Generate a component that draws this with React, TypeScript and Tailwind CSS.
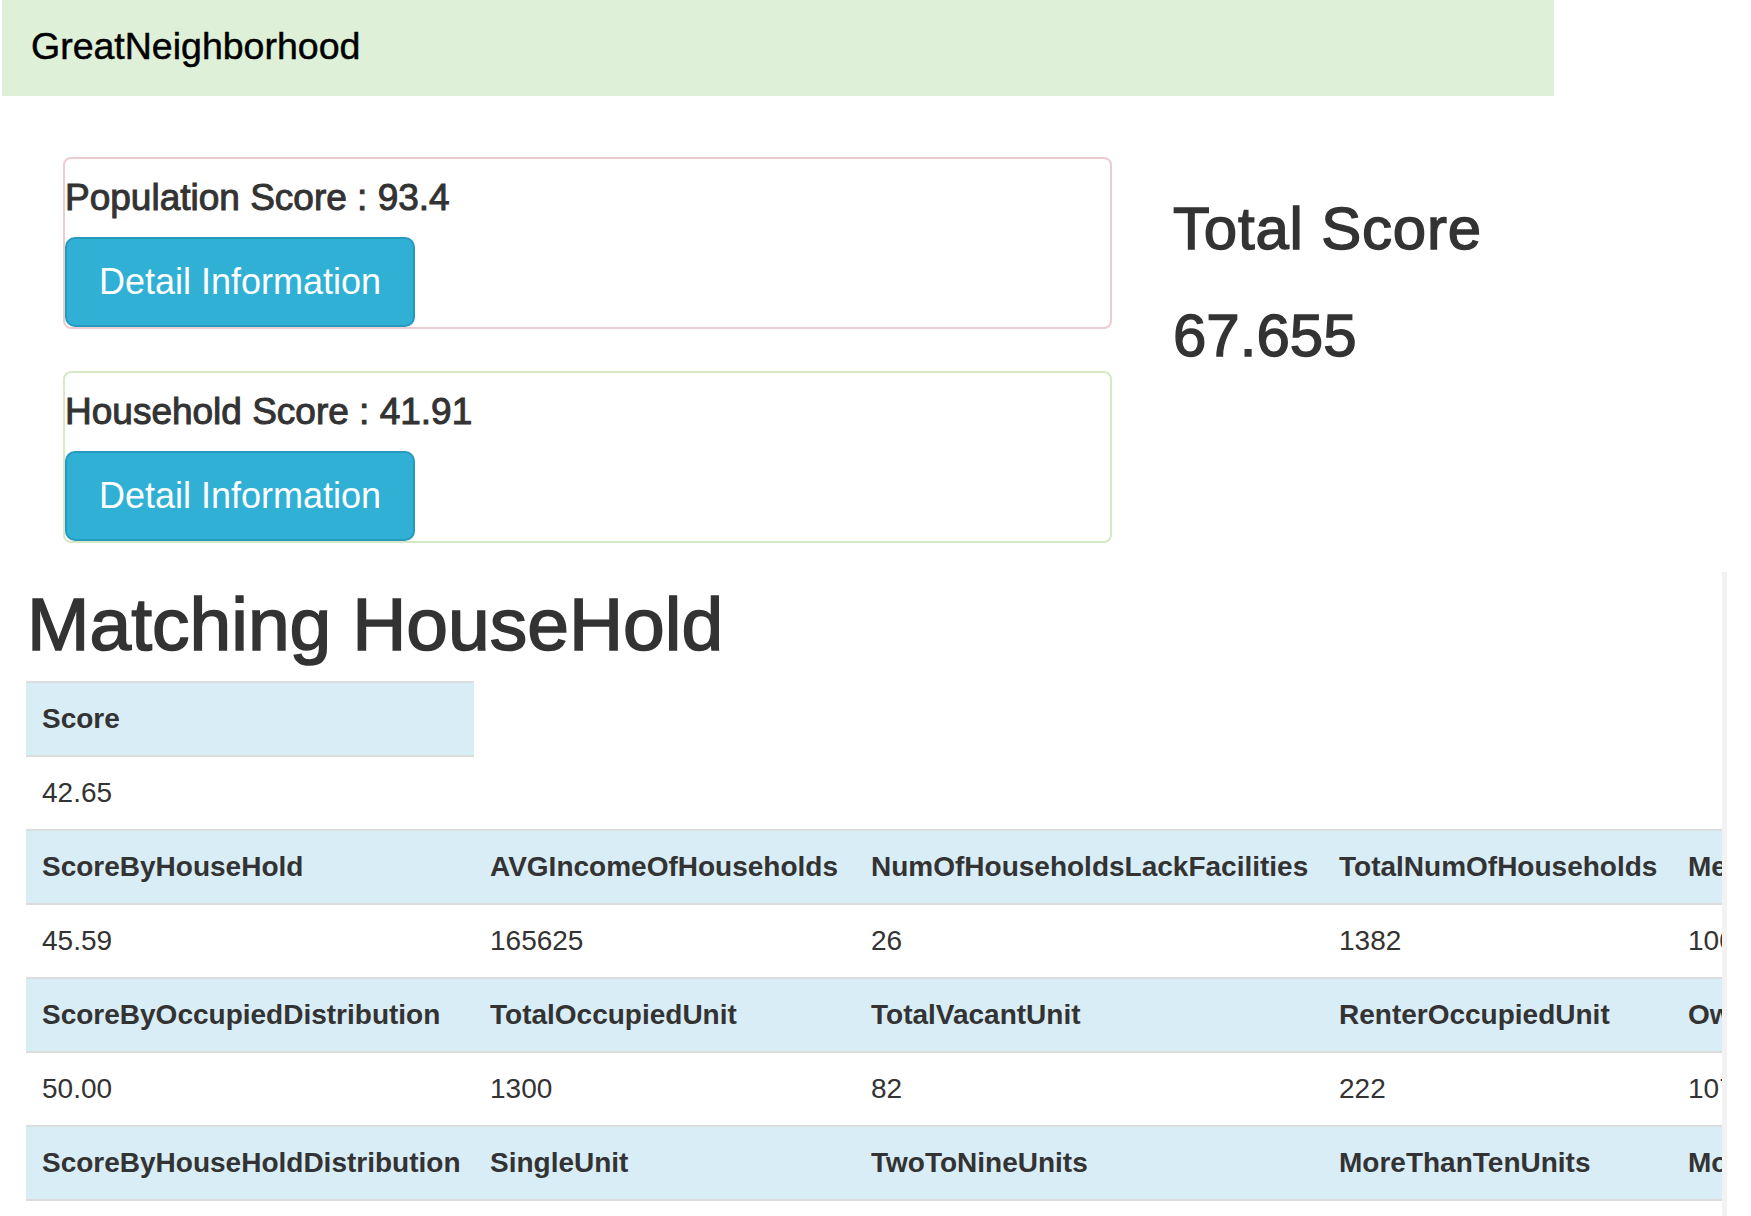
import React from "react";

type Cell = { text: string; head?: boolean };

const rows: Cell[][] = [
  [{ text: "Score", head: true }],
  [{ text: "42.65" }],
  [
    { text: "ScoreByHouseHold", head: true },
    { text: "AVGIncomeOfHouseholds", head: true },
    { text: "NumOfHouseholdsLackFacilities", head: true },
    { text: "TotalNumOfHouseholds", head: true },
    { text: "MedianIncomeOfHouseholds", head: true },
  ],
  [{ text: "45.59" }, { text: "165625" }, { text: "26" }, { text: "1382" }, { text: "100650" }],
  [
    { text: "ScoreByOccupiedDistribution", head: true },
    { text: "TotalOccupiedUnit", head: true },
    { text: "TotalVacantUnit", head: true },
    { text: "RenterOccupiedUnit", head: true },
    { text: "OwnerOccupiedUnit", head: true },
  ],
  [{ text: "50.00" }, { text: "1300" }, { text: "82" }, { text: "222" }, { text: "1078" }],
  [
    { text: "ScoreByHouseHoldDistribution", head: true },
    { text: "SingleUnit", head: true },
    { text: "TwoToNineUnits", head: true },
    { text: "MoreThanTenUnits", head: true },
    { text: "MobileHomeUnits", head: true },
  ],
  [{ text: "38.12" }, { text: "840" }, { text: "312" }, { text: "218" }, { text: "12" }],
];

function ScoreCard({ label, value, border }: { label: string; value: string; border: string }) {
  return (
    <div className={`rounded-[8px] border-2 ${border} pt-[18px]`}>
      <h4 className="text-[37px] leading-[41px] mb-[19px] [-webkit-text-stroke:1px_#333]">
        {label} : {value}
      </h4>
      <button className="h-[90px] px-[32px] py-[18px] rounded-[10px] border-2 border-[#269abc] bg-[#31b0d5] text-white text-[36px] leading-[48px]">
        Detail Information
      </button>
    </div>
  );
}

export default function App() {
  return (
    <div className="min-h-screen bg-white text-[#333] font-['Liberation_Sans',Arial,sans-serif]">
      <header className="ml-[2px] w-[1552px] h-[96px] bg-[#dff0d8] pl-[29px] pt-[26px]">
        <span className="text-[37.5px] leading-[40px] text-black [-webkit-text-stroke:0.5px_#000]">
          GreatNeighborhood
        </span>
      </header>

      <div className="flex pl-[63px] pt-[61px]">
        <div className="w-[1049px] flex flex-col gap-[42px]">
          <ScoreCard label="Population Score" value="93.4" border="border-[#ebccd1]" />
          <ScoreCard label="Household Score" value="41.91" border="border-[#d6e9c6]" />
        </div>
        <div className="ml-[61px] pt-[39px]">
          <h2 className="text-[60px] leading-[66px] tracking-[0.8px] [-webkit-text-stroke:1.4px_#333]">
            Total Score
          </h2>
          <h2 className="mt-[41px] text-[60px] leading-[66px] [-webkit-text-stroke:1.4px_#333]">67.655</h2>
        </div>
      </div>

      <section className="mt-[29px] w-[1727px] overflow-hidden border-r-[5px] border-r-[#f2f2f2]">
        <h1 className="mt-[11px] ml-[27px] text-[75px] leading-[82px] [-webkit-text-stroke:1.6px_#333]">
          Matching HouseHold
        </h1>
        <table className="ml-[26px] mt-[16px] w-[2100px] table-fixed text-[28px] leading-[40px]">
          <colgroup>
            <col className="w-[448px]" />
            <col className="w-[381px]" />
            <col className="w-[468px]" />
            <col className="w-[349px]" />
            <col className="w-[454px]" />
          </colgroup>
          <tbody>
            {rows.map((r, i) => (
              <tr key={i}>
                {r.map((c, j) =>
                  c.head ? (
                    <th
                      key={j}
                      className="text-left font-bold whitespace-nowrap px-[16px] py-[16px] border-t-2 border-[#dddddd] bg-[#d9edf7]"
                    >
                      {c.text}
                    </th>
                  ) : (
                    <td key={j} className="whitespace-nowrap px-[16px] py-[16px] border-t-2 border-[#dddddd]">
                      {c.text}
                    </td>
                  )
                )}
              </tr>
            ))}
          </tbody>
        </table>
      </section>
    </div>
  );
}
